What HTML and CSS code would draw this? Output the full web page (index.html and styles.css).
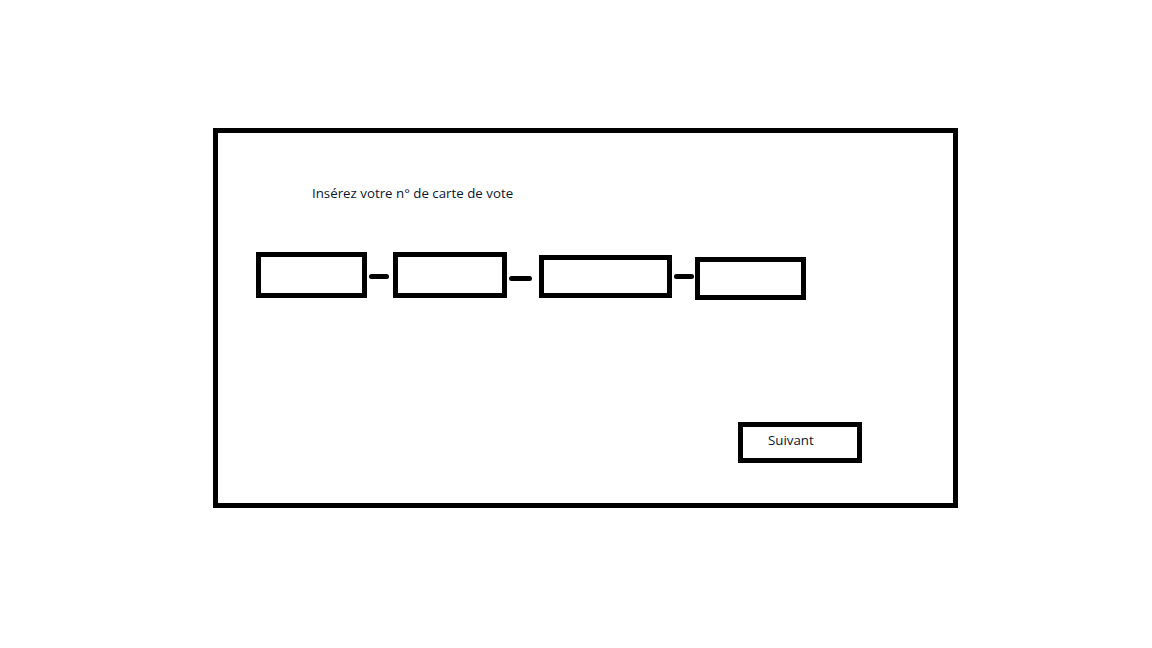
FILE: index.html
```html
<!DOCTYPE html>
<html lang="fr">
<head>
<meta charset="utf-8">
<title>Carte de vote</title>
<link rel="stylesheet" href="styles.css">
</head>
<body>
<div class="frame">
  <p class="title">Insérez votre n° de carte de vote</p>
  <div class="code-row">
    <div class="box box-1"></div>
    <div class="dash dash-1"></div>
    <div class="box box-2"></div>
    <div class="dash dash-2"></div>
    <div class="box box-3"></div>
    <div class="dash dash-3"></div>
    <div class="box box-4"></div>
  </div>
  <div class="actions">
    <div class="next-btn">Suivant</div>
  </div>
</div>
</body>
</html>
```
FILE: styles.css
```css
html, body {
  margin: 0;
  padding: 0;
  background: #ffffff;
}
body {
  width: 1152px;
  height: 648px;
  overflow: hidden;
  font-family: "Open Sans", "Liberation Sans", sans-serif;
  color: #08162e;
}
.frame {
  box-sizing: border-box;
  margin: 128px 0 0 213px;
  width: 745px;
  height: 380px;
  border: 5px solid #000;
  padding: 0;
}
.title {
  margin: 51px 0 0 94px;
  font-size: 13.3px;
  line-height: 18px;
}
.code-row {
  display: flex;
  align-items: flex-start;
  margin: 50px 0 0 38px;
}
.box {
  box-sizing: border-box;
  border: 5px solid #000;
  background: #fff;
}
.box-1 { width: 111px; height: 46px; margin-top: 0; }
.box-2 { width: 114px; height: 46px; margin-top: 0; }
.box-3 { width: 133px; height: 43px; margin-top: 3px; }
.box-4 { width: 111px; height: 43px; margin-top: 5px; }
.dash {
  height: 5px;
  background: #000;
  border-radius: 3px;
}
.dash-1 { width: 20px; margin: 22px 4px 0 2px; }
.dash-2 { width: 23px; margin: 24px 7px 0 2px; }
.dash-3 { width: 20px; margin: 22px 1px 0 2px; }
.actions {
  margin: 122px 0 0 520px;
}
.next-btn {
  box-sizing: border-box;
  width: 124px;
  height: 41px;
  border: 5px solid #000;
  padding: 4px 0 0 25px;
  font-size: 13.3px;
  line-height: 18px;
}
```
